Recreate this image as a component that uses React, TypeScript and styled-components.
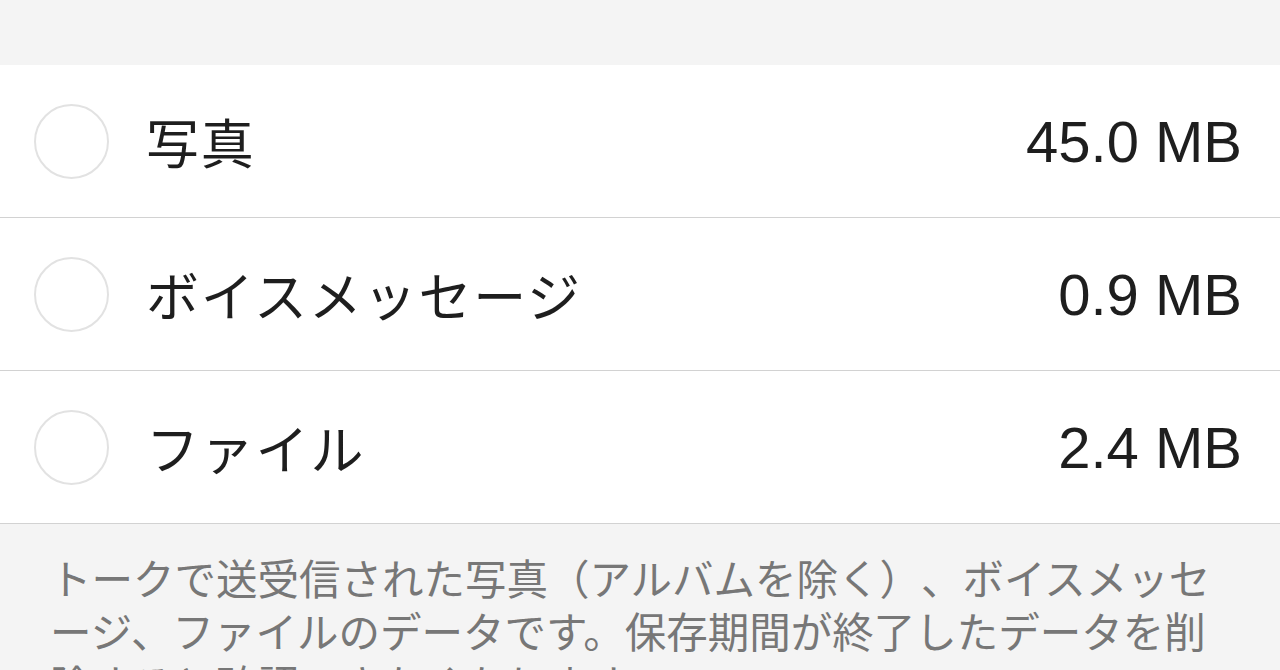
import React from "react";
import styled, { createGlobalStyle } from "styled-components";

const GlobalStyle = createGlobalStyle`
  html, body {
    margin: 0;
    padding: 0;
    background: #f4f4f4;
    overflow: hidden;
  }
  body {
    font-family: "Noto Sans CJK JP", "Noto Sans", sans-serif;
  }
`;

interface Item {
  label: string;
  size: string;
}

const items: Item[] = [
  { label: "写真", size: "45.0 MB" },
  { label: "ボイスメッセージ", size: "0.9 MB" },
  { label: "ファイル", size: "2.4 MB" },
];

const App = () => {
  return (
    <Page>
      <GlobalStyle />
      <TopSpace />
      <List>
        {items.map((item) => (
          <Row key={item.label}>
            <Radio />
            <Label>{item.label}</Label>
            <Size>{item.size}</Size>
          </Row>
        ))}
      </List>
      <Note>
        トークで送受信された写真（アルバムを除く）、ボイスメッセージ、ファイルのデータです。保存期間が終了したデータを削除すると確認できなくなります。
      </Note>
    </Page>
  );
};

const Page = styled.div`
  width: 1280px;
  height: 670px;
  overflow: hidden;
  background: #f4f4f4;
`;

const TopSpace = styled.div`
  height: 65px;
`;

const List = styled.div`
  background: #ffffff;
`;

const Row = styled.div`
  display: flex;
  align-items: center;
  box-sizing: border-box;
  height: 153px;
  padding: 0 38px 0 34px;
  border-bottom: 1.5px solid #d2d2d2;
`;

const Radio = styled.div`
  width: 71px;
  height: 71px;
  border: 2px solid #e2e2e2;
  border-radius: 50%;
  flex-shrink: 0;
`;

const Label = styled.div`
  margin-left: 37px;
  flex: 1;
  font-size: 53px;
  color: #1e1e1e;
  letter-spacing: 1.8px;
`;

const Size = styled.div`
  font-family: "Liberation Sans", "Noto Sans", sans-serif;
  font-size: 58px;
  color: #1e1e1e;
`;

const Note = styled.div`
  padding: 27px 60px 0 50px;
  font-size: 41.5px;
  line-height: 53px;
  color: #777777;
  text-spacing-trim: space-all;
`;

export default App;
